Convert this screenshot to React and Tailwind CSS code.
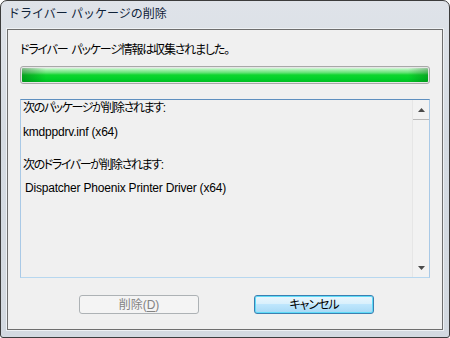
import React from "react";

function Arrow({ up }) {
  return (
    <svg width="7" height="4" viewBox="0 0 7 4" className="block">
      {up ? (
        <path d="M3.5 0 L7 4 L0 4 Z" fill="#4a4a4a" />
      ) : (
        <path d="M0 0 L7 0 L3.5 4 Z" fill="#4a4a4a" />
      )}
    </svg>
  );
}

export default function App() {
  return (
    <div className="w-[450px] h-[338px] bg-white [font-family:'Liberation_Sans','Noto_Sans_CJK_JP',sans-serif]">
      {/* window frame */}
      <div className="w-full h-full flex flex-col rounded-t-[7px] rounded-b-[3px] border border-[#3c3c3c] bg-[linear-gradient(to_bottom,#dfe3e9,#d5dbe2_40%,#d3d9e0)]">
        {/* title bar */}
        <div className="h-[28px] px-[7px] pt-[5px] text-[12px] leading-[16px] text-[#0f2238]">
          ドライバー パッケージの削除
        </div>

        {/* client area */}
        <div className="flex-1 mx-[6px] mb-[7px] border border-[#6e6e6e] bg-[#f0f0f0] shadow-[0_0_0_1px_#eef1f4] px-[12px] pt-[12px]">
          <div className="h-[16px] flex text-[12px] leading-[16px] text-black tracking-[-1.2px] [font-feature-settings:'palt']">
            <span>ドライバー</span>
            <span className="ml-[4px]">パッケージ情報は収集されました。</span>
          </div>

          {/* progress bar */}
          <div className="mt-[8px] h-[18px] rounded-[3px] border border-[#a8a8a8] bg-[#e6e6e6] p-px">
            <div className="relative h-full rounded-[1px] overflow-hidden bg-[linear-gradient(to_bottom,#d8f8dc_0%,#a2efab_14%,#62e273_34%,#0fd52e_50%,#00d128_78%,#00bd22_100%)]">
              <div className="absolute left-0 top-0 h-full w-[24px] bg-[linear-gradient(to_right,rgba(0,70,10,0.35),rgba(0,70,10,0))]" />
              <div className="absolute right-0 top-0 h-full w-[20px] bg-[linear-gradient(to_left,rgba(0,70,10,0.3),rgba(0,70,10,0))]" />
            </div>
          </div>

          {/* list box */}
          <div className="mt-[15px] h-[179px] flex border border-[#a9c9e6] border-t-[#5e8fbf] border-b-[#b7d7ef] bg-[#f0f0f0]">
            <div className="flex-1 pl-[2px] text-[12px] leading-[16px] text-black">
              <div className="tracking-[-1.4px] [font-feature-settings:'palt']">次のパッケージが削除されます:</div>
              <div className="mt-[8px] tracking-[-0.2px]">kmdppdrv.inf (x64)</div>
              <div className="mt-[17px] tracking-[-1.4px] [font-feature-settings:'palt']">次のドライバーが削除されます:</div>
              <div className="mt-[7px] pl-[2px] tracking-[-0.2px]">Dispatcher Phoenix Printer Driver (x64)</div>
            </div>

            {/* scrollbar */}
            <div className="w-[17px] flex flex-col border-l border-[#e6e6e6] bg-[#f2f2f2]">
              <div className="h-[20px] flex items-center justify-center border-b border-[#b9b9b9]">
                <Arrow up />
              </div>
              <div className="flex-1" />
              <div className="h-[18px] flex items-center justify-center">
                <Arrow />
              </div>
            </div>
          </div>

          {/* buttons */}
          <div className="mt-[17px] flex">
            <div className="ml-[59px] w-[120px] h-[19px] rounded-[3px] border border-[#adb2b5] bg-[#f4f4f4] flex items-center justify-center text-[12px] leading-[16px] text-[#838383]">
              削除(<span className="underline underline-offset-2">D</span>)
            </div>
            <div className="ml-[55px] w-[120px] h-[19px] rounded-[3px] border border-[#3c7fb1] shadow-[inset_0_0_0_1px_#5fdcf8] bg-[linear-gradient(to_bottom,#eaf6fd,#d9f0fc_45%,#bee6fd_50%,#a7d9f5)] flex items-center justify-center text-[12px] leading-[16px] text-black tracking-[-1px] [font-feature-settings:'palt']">
              キャンセル
            </div>
          </div>
        </div>
      </div>
    </div>
  );
}
